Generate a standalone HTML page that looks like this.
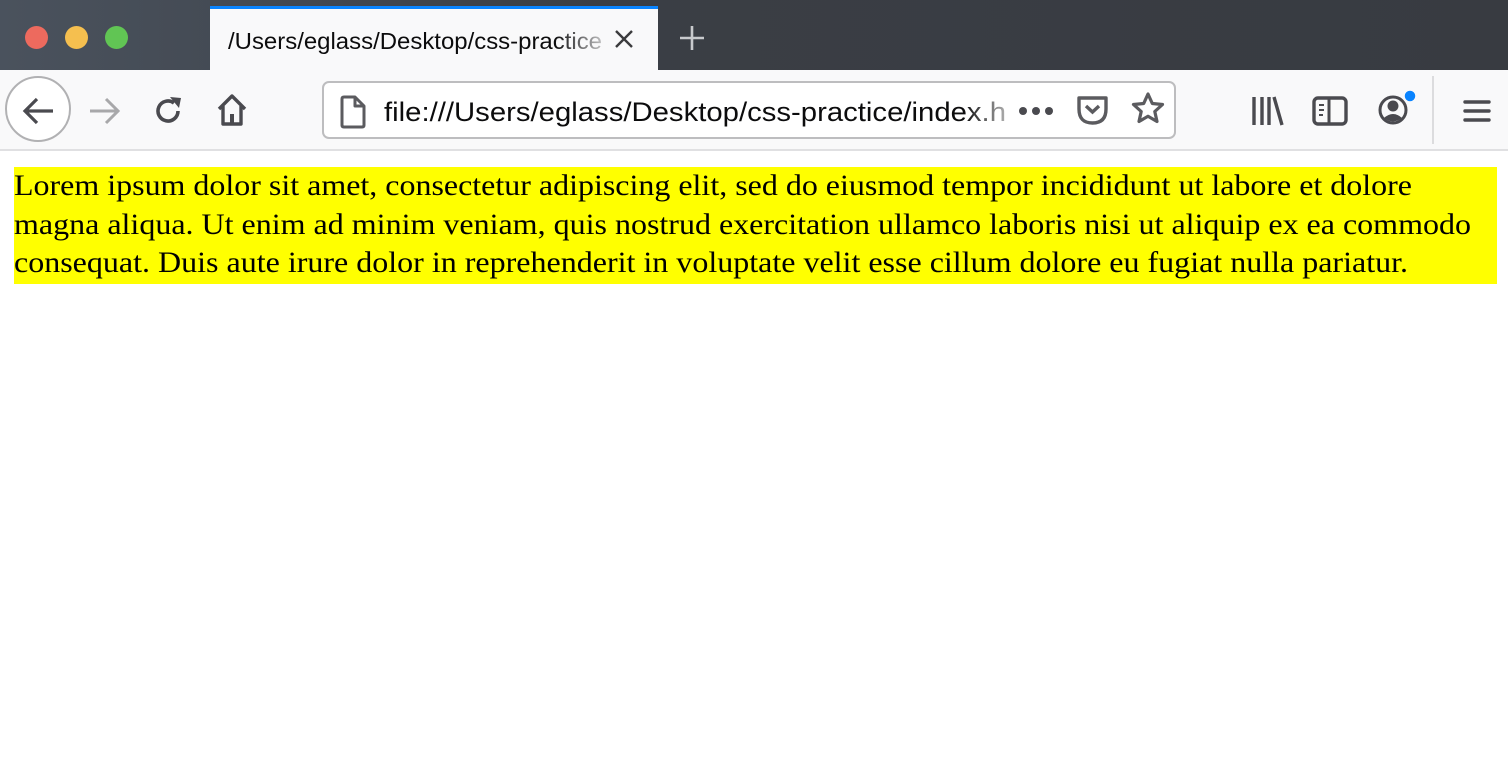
<!DOCTYPE html>
<html><head><style>
*{margin:0;padding:0;box-sizing:border-box}
body{width:1508px;height:784px;background:#fff;position:relative;overflow:hidden;font-family:"Liberation Sans",sans-serif}
.titlebar{position:absolute;left:0;top:0;width:1508px;height:70px;background:linear-gradient(90deg,#4a525d,#3a3e45 40%,#383b41)}
.dot{position:absolute;top:26px;width:23px;height:23px;border-radius:50%}
.tab{position:absolute;left:210px;top:6px;width:448px;height:64px;background:#f9f9fa;border-top:3px solid #0a84ff}
.toolbar{position:absolute;left:0;top:70px;width:1508px;height:81px;background:#f9f9fa;border-bottom:2px solid #e0e0e2}
.url{position:absolute;left:322px;top:11px;width:854px;height:58px;background:#fff;border:2px solid #bdbdbf;border-radius:7px}
.content{position:absolute;left:14px;top:167px;width:1483px;height:117px;background:#ff0}
</style></head><body>
<div class="titlebar">
<div class="dot" style="left:25px;background:#ed6a5e"></div>
<div class="dot" style="left:65px;background:#f5bf4f"></div>
<div class="dot" style="left:105px;background:#61c554"></div>
<div class="tab">
<svg style="position:absolute;left:0;top:0" width="400" height="60"><text x="18" y="40" font-family="Liberation Sans" font-size="23" fill="#0c0c0d" textLength="374" lengthAdjust="spacingAndGlyphs">/Users/eglass/Desktop/css-practice</text></svg>
<div style="position:absolute;left:345px;top:0;width:50px;height:58px;background:linear-gradient(90deg,rgba(249,249,250,0),rgba(249,249,250,.8))"></div>
<svg style="position:absolute;left:404px;top:20px" width="20" height="20"><path d="M2 2L18 18M18 2L2 18" stroke="#3b3b3d" stroke-width="2.4"/></svg>
</div>
<svg style="position:absolute;left:678px;top:24px" width="28" height="28"><path d="M14 2V26M2 14H26" stroke="#c8cacd" stroke-width="2.6"/></svg>
</div>
<div class="toolbar">
<div style="position:absolute;left:5px;top:6px;width:66px;height:66px;border-radius:50%;border:2px solid #b1b1b3;background:#fff"></div>
<svg style="position:absolute;left:22px;top:26px" width="34" height="30"><path d="M31 15H4M15 3L3 15L15 27" stroke="#4a4a4f" stroke-width="3.2" fill="none"/></svg>
<svg style="position:absolute;left:87px;top:26px" width="34" height="30"><path d="M3 15H30M19 3L31 15L19 27" stroke="#a8a8aa" stroke-width="3" fill="none"/></svg>
<svg style="position:absolute;left:152px;top:24px" width="34" height="34"><path d="M26 17A10 10 0 1 1 22 9" stroke="#4a4a4f" stroke-width="3.6" fill="none"/><path d="M18 3L29 4L27 14Z" fill="#4a4a4f"/></svg>
<svg style="position:absolute;left:215px;top:22px" width="34" height="36"><path d="M4 17L17 4L30 17M8 14V32H26V14" stroke="#4a4a4f" stroke-width="3.4" fill="none" stroke-linejoin="round"/><rect x="15" y="22" width="4" height="10" fill="#4a4a4f"/></svg>
<div class="url">
<svg style="position:absolute;left:15px;top:12px" width="28" height="34"><path d="M3 4Q3 2 5 2H16L25 11V30Q25 32 23 32H5Q3 32 3 30Z M16 2V11H25" stroke="#5b5b5f" stroke-width="3" fill="none" stroke-linejoin="round"/></svg>
<svg style="position:absolute;left:0;top:0" width="700" height="54"><text x="60" y="38" font-family="Liberation Sans" font-size="27" fill="#0c0c0d" textLength="622" lengthAdjust="spacingAndGlyphs">file:///Users/eglass/Desktop/css-practice/index.h</text></svg>
<div style="position:absolute;left:640px;top:0;width:50px;height:54px;background:linear-gradient(90deg,rgba(255,255,255,0),rgba(255,255,255,.8))"></div>
<svg style="position:absolute;left:693px;top:20px" width="40" height="16"><circle cx="6" cy="8" r="4" fill="#4a4a4f"/><circle cx="19" cy="8" r="4" fill="#4a4a4f"/><circle cx="32" cy="8" r="4" fill="#4a4a4f"/></svg>
<svg style="position:absolute;left:751px;top:10px" width="36" height="34"><path d="M4 5H31V16Q31 30 17.5 30Q4 30 4 16Z" stroke="#5b5b5f" stroke-width="3.4" fill="none" stroke-linejoin="round"/><path d="M11 13L17.5 19L24 13" stroke="#5b5b5f" stroke-width="3.4" fill="none"/></svg>
<svg style="position:absolute;left:806px;top:8px" width="36" height="36"><path d="M18 3L22.3 12.5L32.5 13.5L24.8 20.5L27 30.5L18 25.3L9 30.5L11.2 20.5L3.5 13.5L13.7 12.5Z" stroke="#5b5b5f" stroke-width="3.2" fill="none" stroke-linejoin="round"/></svg>
</div>
<svg style="position:absolute;left:1250px;top:24px" width="34" height="34"><path d="M4 3V31M12 3V31M19 3V31M24 3L32 31" stroke="#4a4a4f" stroke-width="3.4"/></svg>
<svg style="position:absolute;left:1312px;top:25px" width="36" height="32"><rect x="2" y="3" width="32" height="26" rx="4" stroke="#4a4a4f" stroke-width="3.4" fill="none"/><path d="M17 3V29" stroke="#4a4a4f" stroke-width="3"/><path d="M7 10H12M7 15H12M7 20H11" stroke="#4a4a4f" stroke-width="2"/></svg>
<svg style="position:absolute;left:1376px;top:20px" width="44" height="40"><circle cx="17" cy="20" r="13" stroke="#4a4a4f" stroke-width="3" fill="none"/><circle cx="17" cy="16" r="5.5" fill="#4a4a4f"/><path d="M8 28Q17 20 26 28Q17 35 8 28Z" fill="#4a4a4f"/><circle cx="34" cy="6" r="6" fill="#0a84ff" stroke="#f9f9fa" stroke-width="1.5"/></svg>
<div style="position:absolute;left:1432px;top:6px;width:2px;height:68px;background:#dcdcde"></div>
<svg style="position:absolute;left:1463px;top:28px" width="28" height="26"><path d="M2 4H26M2 13H26M2 22H26" stroke="#4a4a4f" stroke-width="3.4" stroke-linecap="round"/></svg>
</div>
<div class="content">
<svg width="1483" height="117" style="position:absolute;left:0;top:0" font-family="Liberation Serif" font-size="30" fill="#000">
<text x="0" y="28" textLength="1398" lengthAdjust="spacingAndGlyphs">Lorem ipsum dolor sit amet, consectetur adipiscing elit, sed do eiusmod tempor incididunt ut labore et dolore</text>
<text x="0" y="67" textLength="1457" lengthAdjust="spacingAndGlyphs">magna aliqua. Ut enim ad minim veniam, quis nostrud exercitation ullamco laboris nisi ut aliquip ex ea commodo</text>
<text x="0" y="105" textLength="1394" lengthAdjust="spacingAndGlyphs">consequat. Duis aute irure dolor in reprehenderit in voluptate velit esse cillum dolore eu fugiat nulla pariatur.</text>
</svg>
</div>
</body></html>
